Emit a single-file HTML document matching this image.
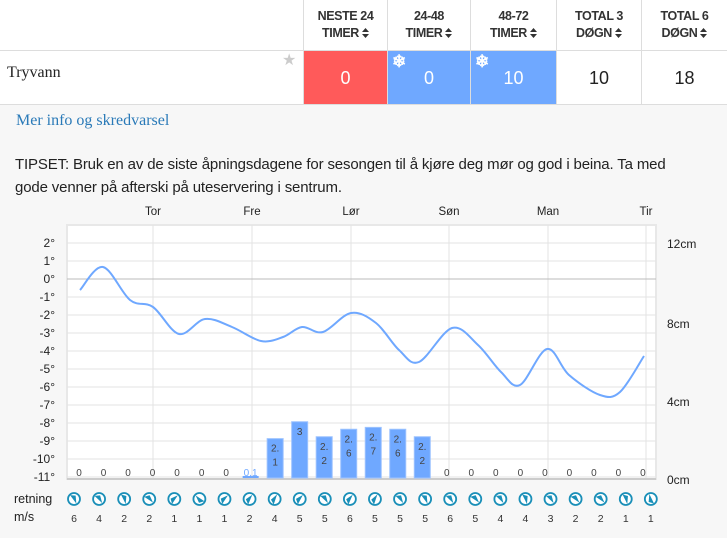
<!DOCTYPE html>
<html><head><meta charset="utf-8">
<style>
body{margin:0;width:727px;height:537px;overflow:hidden;background:#fff;font-family:"Liberation Sans",sans-serif;position:relative}
.a{position:absolute}
.h{position:absolute;top:0;height:50px;border-left:1px solid #ddd;text-align:center;font-size:12.5px;font-weight:bold;color:#333;line-height:17px;padding-top:8px;box-sizing:border-box;letter-spacing:-0.4px}
.c{position:absolute;top:51px;height:53px;border-left:1px solid #ddd;text-align:center;font-size:18px;line-height:55px;box-sizing:border-box}
.ar{display:inline-block;width:7px;height:10px;vertical-align:-1px}
</style></head><body>
<div class="a" style="left:0;top:50px;width:727px;height:1px;background:#ddd"></div>
<div class="h" style="left:303px;width:84px">NESTE 24<br>TIMER <svg class="ar" viewBox="0 0 7 10"><path d="M0,4 L3.5,0 L7,4Z M0,6 L3.5,10 L7,6Z" fill="#333"/></svg></div>
<div class="h" style="left:387px;width:83px">24-48<br>TIMER <svg class="ar" viewBox="0 0 7 10"><path d="M0,4 L3.5,0 L7,4Z M0,6 L3.5,10 L7,6Z" fill="#333"/></svg></div>
<div class="h" style="left:470px;width:86px">48-72<br>TIMER <svg class="ar" viewBox="0 0 7 10"><path d="M0,4 L3.5,0 L7,4Z M0,6 L3.5,10 L7,6Z" fill="#333"/></svg></div>
<div class="h" style="left:556px;width:85px">TOTAL 3<br>DØGN <svg class="ar" viewBox="0 0 7 10"><path d="M0,4 L3.5,0 L7,4Z M0,6 L3.5,10 L7,6Z" fill="#333"/></svg></div>
<div class="h" style="left:641px;width:86px">TOTAL 6<br>DØGN <svg class="ar" viewBox="0 0 7 10"><path d="M0,4 L3.5,0 L7,4Z M0,6 L3.5,10 L7,6Z" fill="#333"/></svg></div>
<div class="a" style="left:7px;top:64px;font-family:'Liberation Serif',serif;font-size:16px;color:#222">Tryvann</div>
<div class="a" style="left:282px;top:50px;color:#ccc;font-size:16px">&#9733;</div>
<div class="c" style="left:303px;width:84px;background:#ff5a5a;color:#fff">0</div>
<div class="c" style="left:387px;width:83px;background:#6fa8ff;color:#fff">0<span class="a" style="left:4px;top:-17px;font-size:17px;font-weight:bold">&#10052;</span></div>
<div class="c" style="left:470px;width:86px;background:#6fa8ff;color:#fff">10<span class="a" style="left:4px;top:-17px;font-size:17px;font-weight:bold">&#10052;</span></div>
<div class="c" style="left:556px;width:85px;color:#222">10</div>
<div class="c" style="left:641px;width:86px;color:#222">18</div>
<div class="a" style="left:0;top:104px;width:727px;height:433px;background:#f7f7f7;border-top:1px solid #ddd"></div>
<div class="a" style="left:16px;top:112px;font-family:'Liberation Serif',serif;font-size:16px;color:#2a7ab8">Mer info og skredvarsel</div>
<div class="a" style="left:15px;top:153px;font-size:15px;color:#222;line-height:23px;width:680px;letter-spacing:-0.15px">TIPSET: Bruk en av de siste åpningsdagene for sesongen til å kjøre deg mør og god i beina. Ta med gode venner på afterski på uteservering i sentrum.</div>
<svg class="a" style="left:0;top:0" width="727" height="537" id="s" font-family="Liberation Sans, sans-serif"></svg>
<script>
var s=document.getElementById('s'),h='';
h+='<rect x="67" y="225" width="589" height="254" fill="#fff" stroke="#e8e8e8" stroke-width="2"/>';
var days=['Tor','Fre','Lør','Søn','Man','Tir'],dx=[153,252,351,449,548,646];
for(var i=0;i<6;i++){h+='<line x1="'+dx[i]+'" y1="225" x2="'+dx[i]+'" y2="479" stroke="#e3e3e3"/>';h+='<text x="'+dx[i]+'" y="215" font-size="11.5" text-anchor="middle" fill="#222">'+days[i]+'</text>';}
for(var k=0;k<14;k++){var y=243+18*k;h+='<line x1="67" y1="'+y+'" x2="656" y2="'+y+'" stroke="'+(k==2?'#bbb':'#e3e3e3')+'"/>';h+='<text x="55" y="'+(y+4)+'" font-size="12" text-anchor="end" fill="#222">'+(2-k)+'°</text>';}
h+='<line x1="67" y1="479" x2="656" y2="479" stroke="#ccc" stroke-width="2"/>';
[['12cm',248],['8cm',328],['4cm',406],['0cm',484]].forEach(function(t){h+='<text x="667" y="'+t[1]+'" font-size="12" fill="#222">'+t[0]+'</text>'});
var snow=[0,0,0,0,0,0,0,0.1,2.1,3,2.2,2.6,2.7,2.6,2.2,0,0,0,0,0,0,0,0,0];
for(var i=0;i<24;i++){var x=79+24.52*i,v=snow[i];
 if(v>=1){var bh=v*18.75;h+='<rect x="'+(x-8)+'" y="'+(478-bh)+'" width="16" height="'+bh+'" fill="#6fa8ff" stroke="#9cc2ff"/>';
  var st=String(v);if(st.length>1){h+='<text x="'+x+'" y="'+(478-bh+13)+'" font-size="10" text-anchor="middle" fill="#444">'+st.slice(0,2)+'</text><text x="'+x+'" y="'+(478-bh+27)+'" font-size="10" text-anchor="middle" fill="#444">'+st.slice(2)+'</text>';}else h+='<text x="'+x+'" y="'+(478-bh+13)+'" font-size="10" text-anchor="middle" fill="#444">'+st+'</text>';}
 else if(v>0){h+='<line x1="'+(x-8)+'" y1="477" x2="'+(x+8)+'" y2="477" stroke="#6fa8ff" stroke-width="2"/><text x="'+x+'" y="476" font-size="10" text-anchor="middle" fill="#6fa8ff">0.1</text>';}
 else h+='<text x="'+x+'" y="476" font-size="10" text-anchor="middle" fill="#444">0</text>';}
var p=[[80,290],[103,267],[130,300],[153,307],[179,334],[205,319],[232,327],[261,341],[283,337],[302,327],[323,332],[351,313],[376,323],[399,350],[419,362],[452,328],[478,345],[501,372],[520,385],[547,349],[569,375],[600,395],[620,392],[644,356]];
var d='M'+p[0];
for(var i=0;i<p.length-1;i++){var p0=p[i-1]||p[i],p1=p[i],p2=p[i+1],p3=p[i+2]||p2;
 d+=' C'+(p1[0]+(p2[0]-p0[0])/6)+','+(p1[1]+(p2[1]-p0[1])/6)+' '+(p2[0]-(p3[0]-p1[0])/6)+','+(p2[1]-(p3[1]-p1[1])/6)+' '+p2[0]+','+p2[1];}
h+='<path d="'+d+'" fill="none" stroke="#6fa8ff" stroke-width="2"/>';
h+='<text x="14" y="503" font-size="12.5" fill="#222">retning</text><text x="14" y="521" font-size="12.5" fill="#222">m/s</text>';
var ang=[170,160,180,150,60,330,60,50,45,55,160,50,45,160,170,160,150,160,180,160,150,150,180,0];
var ms=[6,4,2,2,1,1,1,2,4,5,5,6,5,5,5,6,5,4,4,3,2,2,1,1];
for(var i=0;i<24;i++){var x=74+25.08*i;
 h+='<circle cx="'+x+'" cy="499" r="6" fill="#fff" stroke="#1a8fb8" stroke-width="1.8"/>';
 h+='<path d="M'+(x-1.5)+',494 L'+(x+3.2)+',503.5 L'+(x-2.2)+',502 Z" fill="#1a8fb8" transform="rotate('+ang[i]+' '+x+' 499)"/>';
 h+='<text x="'+x+'" y="522" font-size="10.5" text-anchor="middle" fill="#333">'+ms[i]+'</text>';}
s.innerHTML=h;
</script>
</body></html>
